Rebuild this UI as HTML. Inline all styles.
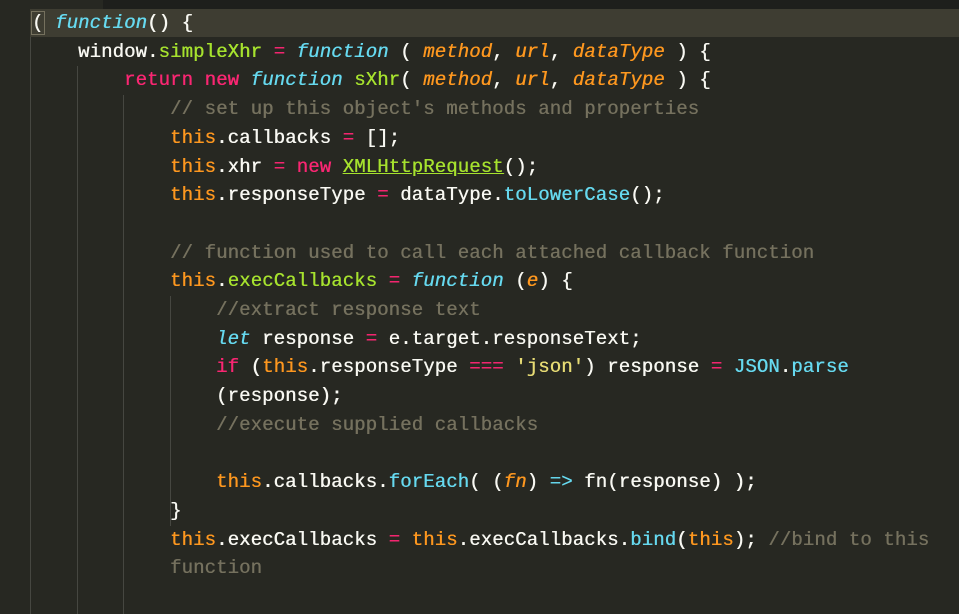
<!DOCTYPE html>
<html><head><style>
html,body{margin:0;padding:0;background:#272822;width:959px;height:614px;overflow:hidden}
#top{position:absolute;left:103px;top:0;width:856px;height:9px;background:#1e1f1c}
#hl{position:absolute;left:30px;top:9px;width:929px;height:28px;background:#3e3d32}
#code{position:absolute;left:32px;top:9px;font-family:"Liberation Mono",monospace;font-size:19px;line-height:28.7px;color:#f8f8f2;white-space:pre;letter-spacing:0.1px;text-shadow:0.4px 0 0 currentColor}
.g{position:absolute;width:1px;background:#464741}
.k{color:#f92672}.f{color:#66d9ef;font-style:italic}.c{color:#66d9ef}.n{color:#a6e22e}.p{color:#fd971f;font-style:italic}.t{color:#fd971f}.s{color:#e6db74}.m{color:#75715e}
.u{text-decoration:underline}
.cur{outline:1px solid #75715e}
</style></head><body>
<div id="top"></div>
<div id="hl"></div>
<div class="g" style="left:30px;top:37px;height:577px"></div>
<div class="g" style="left:77px;top:66px;height:548px"></div>
<div class="g" style="left:123px;top:95px;height:519px"></div>
<div class="g" style="left:170px;top:296px;height:230px"></div>
<div id="code"><span class="cur">(</span> <span class="f">function</span>() {
    window.<span class="n">simpleXhr</span> <span class="k">=</span> <span class="f">function</span> ( <span class="p">method</span>, <span class="p">url</span>, <span class="p">dataType</span> ) {
        <span class="k">return</span> <span class="k">new</span> <span class="f">function</span> <span class="n">sXhr</span>( <span class="p">method</span>, <span class="p">url</span>, <span class="p">dataType</span> ) {
            <span class="m">// set up this object's methods and properties</span>
            <span class="t">this</span>.callbacks <span class="k">=</span> [];
            <span class="t">this</span>.xhr <span class="k">=</span> <span class="k">new</span> <span class="n u">XMLHttpRequest</span>();
            <span class="t">this</span>.responseType <span class="k">=</span> dataType.<span class="c">toLowerCase</span>();

            <span class="m">// function used to call each attached callback function</span>
            <span class="t">this</span>.<span class="n">execCallbacks</span> <span class="k">=</span> <span class="f">function</span> (<span class="p">e</span>) {
                <span class="m">//extract response text</span>
                <span class="f">let</span> response <span class="k">=</span> e.target.responseText;
                <span class="k">if</span> (<span class="t">this</span>.responseType <span class="k">===</span> <span class="s">'json'</span>) response <span class="k">=</span> <span class="c">JSON</span>.<span class="c">parse</span>
                (response);
                <span class="m">//execute supplied callbacks</span>

                <span class="t">this</span>.callbacks.<span class="c">forEach</span>( (<span class="p">fn</span>) <span class="c">=&gt;</span> fn(response) );
            }
            <span class="t">this</span>.execCallbacks <span class="k">=</span> <span class="t">this</span>.execCallbacks.<span class="c">bind</span>(<span class="t">this</span>); <span class="m">//bind to this
            function</span>
</div>
</body></html>
